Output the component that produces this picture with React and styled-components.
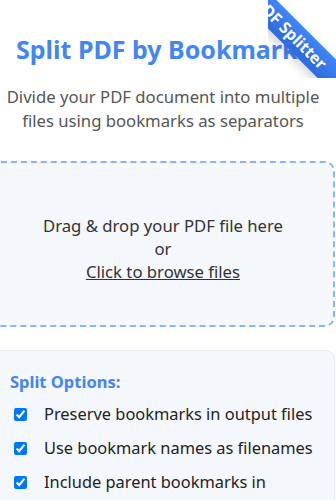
import React from "react";
import styled, { createGlobalStyle } from "styled-components";

const Global = createGlobalStyle`
  html, body { margin: 0; padding: 0; background: #ffffff; overflow: hidden; }
  body { font-family: "Noto Sans", "Open Sans", sans-serif; color: #333; }
`;

const Page = styled.div`
  position: relative;
  width: 344px;
  margin-left: -9px;
  display: flex;
  flex-direction: column;
`;

const Header = styled.header`
  text-align: center;
  padding-top: 31px;
`;

const Title = styled.h1`
  margin: 0;
  font-size: 25px;
  line-height: 36px;
  font-weight: 700;
  color: #4285f4;
`;

const Subtitle = styled.p`
  margin: 18px 0 0;
  font-size: 16.7px;
  line-height: 24px;
  color: #555;
`;

const DropZone = styled.div`
  margin-top: 28px;
  height: 166px;
  box-sizing: border-box;
  border: 2px dashed #8ab4f8;
  border-radius: 10px;
  background: #f4f7fc;
  display: flex;
  flex-direction: column;
  align-items: center;
  justify-content: center;
  padding-top: 9px;
  font-size: 16.7px;
  line-height: 23px;
  color: #333;
`;

const BrowseLink = styled.span`
  text-decoration: underline;
  cursor: pointer;
`;

const Options = styled.section`
  margin-top: 23px;
  box-sizing: border-box;
  border: 1px solid #e5e9f0;
  border-radius: 9px;
  background: #f4f7fc;
  padding: 19px 18px 20px;
`;

const OptionsTitle = styled.h3`
  margin: 0 0 8px;
  font-size: 16.5px;
  line-height: 24px;
  font-weight: 700;
  color: #4285f4;
`;

const OptionRow = styled.label`
  display: block;
  font-size: 16.4px;
  line-height: 24px;
  color: #222;
  margin-bottom: 10px;
`;

const Check = styled.input`
  width: 13px;
  height: 13px;
  margin: 0 17px 0 4px;
  vertical-align: -1px;
`;

const RibbonWrap = styled.div`
  position: absolute;
  top: 0;
  right: -1px;
  width: 68px;
  height: 78px;
  overflow: hidden;
  z-index: 2;
`;

const Ribbon = styled.div`
  position: absolute;
  left: -77px;
  top: 20px;
  width: 200px;
  height: 26px;
  background: linear-gradient(180deg, #3f86f7, #2e6bdc);
  color: #fff;
  font-size: 16px;
  font-weight: 700;
  line-height: 26px;
  text-align: center;
  transform: rotate(45deg);
  text-shadow: 0 1px 1px rgba(0, 0, 0, 0.15);
  box-shadow: 0 5px 10px rgba(0, 0, 0, 0.15);
`;

const options = [
  "Preserve bookmarks in output files",
  "Use bookmark names as filenames",
  "Include parent bookmarks in filenames when nested",
];

export default function App() {
  return (
    <>
      <Global />
      <Page>
        <RibbonWrap>
          <Ribbon>PDF Splitter</Ribbon>
        </RibbonWrap>
        <Header>
          <Title>Split PDF by Bookmarks</Title>
          <Subtitle>
            Divide your PDF document into multiple
            <br />
            files using bookmarks as separators
          </Subtitle>
        </Header>
        <DropZone>
          <span>Drag &amp; drop your PDF file here</span>
          <span>or</span>
          <BrowseLink>Click to browse files</BrowseLink>
        </DropZone>
        <Options>
          <OptionsTitle>Split Options:</OptionsTitle>
          {options.map((o) => (
            <OptionRow key={o}>
              <Check type="checkbox" defaultChecked />
              {o}
            </OptionRow>
          ))}
        </Options>
      </Page>
    </>
  );
}
